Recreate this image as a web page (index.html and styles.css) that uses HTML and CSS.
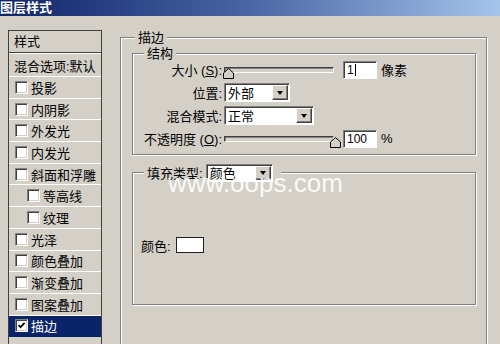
FILE: index.html
```html
<!DOCTYPE html>
<html>
  <head>
    <title>图层样式</title>
    <link rel="stylesheet" href="styles.css">
  </head>
  <body>
    <div class="titlebar">图层样式</div>
    <div class="content">
      <div class="list">
        <div class="list-head">样式</div>
        <div class="item blend">混合选项:默认</div>
        <div class="item"><span class="check"></span>投影</div>
        <div class="item"><span class="check"></span>内阴影</div>
        <div class="item"><span class="check"></span>外发光</div>
        <div class="item"><span class="check"></span>内发光</div>
        <div class="item"><span class="check"></span>斜面和浮雕</div>
        <div class="item sub"><span class="check"></span>等高线</div>
        <div class="item sub"><span class="check"></span>纹理</div>
        <div class="item"><span class="check"></span>光泽</div>
        <div class="item"><span class="check"></span>颜色叠加</div>
        <div class="item"><span class="check"></span>渐变叠加</div>
        <div class="item"><span class="check"></span>图案叠加</div>
        <div class="item selected">
          <span class="check"><svg width="9" height="9" viewBox="0 0 9 9"><polyline points="1.5,4 3.5,6.2 7.6,1.8" fill="none" stroke="#000" stroke-width="1.7"/></svg></span>描边
        </div>
      </div>

      <div class="group main">
        <div class="group-title main-title">描边</div>

        <div class="group struct">
          <div class="group-title inner-title">结构</div>
          <div class="row">
            <span class="row-label">大小 (<u>S</u>):</span>
            <div class="slider">
              <div class="track"></div>
              <svg class="thumb at-min" width="11" height="11" viewBox="0 0 11 11"><polygon points="5.5,0.5 10.5,5 10.5,10.5 0.5,10.5 0.5,5" fill="#d4d0c8" stroke="#000"/></svg>
            </div>
            <div class="field">1<span class="caret"></span></div>
            <span class="unit">像素</span>
          </div>
          <div class="row">
            <span class="row-label">位置:</span>
            <div class="select pos"><span class="select-text">外部</span><span class="drop-btn"><i></i></span></div>
          </div>
          <div class="row">
            <span class="row-label">混合模式:</span>
            <div class="select mode"><span class="select-text">正常</span><span class="drop-btn"><i></i></span></div>
          </div>
          <div class="row">
            <span class="row-label">不透明度 (<u>O</u>):</span>
            <div class="slider">
              <div class="track"></div>
              <svg class="thumb at-max" width="11" height="11" viewBox="0 0 11 11"><polygon points="5.5,0.5 10.5,5 10.5,10.5 0.5,10.5 0.5,5" fill="#d4d0c8" stroke="#000"/></svg>
            </div>
            <div class="field">100</div>
            <span class="unit">%</span>
          </div>
        </div>

        <div class="group fill">
          <div class="group-title fill-title">
            <span>填充类型:</span>
            <div class="select kind"><span class="select-text">颜色</span><span class="drop-btn"><i></i></span></div>
          </div>
          <div class="color-row">
            <span>颜色:</span>
            <span class="swatch"></span>
          </div>
          <div class="watermark">www.oops.com</div>
        </div>
      </div>
    </div>
  </body>
</html>
```

FILE: styles.css
```css
body {
  margin: 0;
  width: 500px;
  height: 344px;
  overflow: hidden;
  background: #d4d0c8;
  color: #000;
  font-family: "Liberation Sans", "Noto Sans CJK SC", sans-serif;
  font-size: 13px;
}

.titlebar {
  height: 16px;
  line-height: 16px;
  background: linear-gradient(to right, #0f2468, #4a66a4 50%, #a4c4ec);
  color: #fff;
  font-weight: bold;
}

.content {
  display: flex;
  align-items: flex-start;
  height: 328px;
  box-sizing: border-box;
  padding: 14px 0 0 8px;
}

/* style list on the left */
.list {
  width: 94px;
  flex: none;
  align-self: stretch;
  box-sizing: border-box;
  border: 1px solid #404040;
  border-bottom: none;
  overflow: hidden;
}
.list-head {
  height: 21px;
  line-height: 21px;
  padding-left: 5px;
  border-bottom: 1px solid #404040;
}
.item {
  display: flex;
  align-items: center;
  height: 21.7px;
  box-sizing: border-box;
  padding-left: 6px;
  border-bottom: 1px solid #fff;
  white-space: nowrap;
}
.item.blend {
  height: 24px;
  padding-left: 5px;
  border-top: 1px solid #fff;
}
.item.sub {
  padding-left: 18px;
}
.item.selected {
  background: #0a246a;
  color: #fff;
  border-bottom-color: #0a246a;
}
.check {
  width: 13px;
  height: 13px;
  flex: none;
  box-sizing: border-box;
  margin-right: 3px;
  border: 1px solid;
  border-color: #808080 #fff #fff #808080;
  box-shadow: inset 1px 1px #404040, inset -1px -1px #d4d0c8;
  background: #fff;
  padding: 1px;
}
.check svg {
  display: block;
}

/* group boxes */
.group {
  display: flex;
  flex-direction: column;
  align-items: flex-start;
  box-sizing: border-box;
  border: 1px solid #808080;
  box-shadow: inset 1px 1px #fff, 1px 1px #fff;
}
.group-title {
  height: 15px;
  line-height: 15px;
  padding: 0 3px;
  background: #d4d0c8;
}
.main {
  width: 367px;
  height: 307px;
  margin: 7px 0 0 18px;
  padding: 0 11px;
  border-bottom: none;
}
.main-title {
  margin: -8px 0 0 3px;
}
.struct {
  width: 344px;
  margin-top: 8px;
  padding-bottom: 4px;
}
.inner-title {
  margin: -8px 0 -3px 11px;
}

.row {
  display: flex;
  align-items: center;
  height: 23px;
}
.row-label {
  width: 89px;
  margin-right: 2px;
  text-align: right;
  white-space: nowrap;
}

.slider {
  position: relative;
  width: 110px;
  height: 6px;
  margin-right: 9px;
}
.track {
  height: 6px;
  box-sizing: border-box;
  border: 1px solid;
  border-color: #404040 #fff #fff #404040;
  box-shadow: inset 1px 1px #808080;
}
.thumb {
  position: absolute;
  top: 1px;
}
.thumb.at-min {
  left: -1px;
}
.thumb.at-max {
  left: 106px;
}

.field {
  display: flex;
  align-items: center;
  width: 34px;
  height: 18px;
  box-sizing: border-box;
  padding-left: 3px;
  border: 1px solid;
  border-color: #808080 #fff #fff #808080;
  box-shadow: inset 1px 1px #404040;
  background: #fff;
  font-size: 12px;
}
.caret {
  width: 1px;
  height: 12px;
  margin-left: 1px;
  background: #000;
}
.unit {
  margin-left: 4px;
}

.select {
  display: flex;
  align-items: center;
  height: 19px;
  box-sizing: border-box;
  padding: 1px;
  border: 1px solid;
  border-color: #808080 #fff #fff #808080;
  box-shadow: inset 1px 1px #404040;
  background: #fff;
}
.select.pos {
  width: 66px;
}
.select.mode {
  width: 90px;
}
.select.kind {
  width: 67px;
  height: 18px;
  margin-left: 3px;
}
.select-text {
  flex: 1;
  padding-left: 2px;
}
.drop-btn {
  display: flex;
  align-items: center;
  justify-content: center;
  width: 16px;
  height: 100%;
  box-sizing: border-box;
  border: 1px solid;
  border-color: #fff #404040 #404040 #fff;
  box-shadow: inset -1px -1px #808080;
  background: #d4d0c8;
}
.drop-btn i {
  width: 0;
  height: 0;
  border-left: 3.5px solid transparent;
  border-right: 3.5px solid transparent;
  border-top: 4px solid #000;
}

.fill {
  position: relative;
  width: 344px;
  height: 133px;
  margin-top: 17px;
}
.fill-title {
  display: flex;
  align-items: center;
  height: 18px;
  margin: -9px 0 0 11px;
  padding: 0 8px 0 3px;
}
.color-row {
  display: flex;
  align-items: center;
  height: 18px;
  margin: 54px 0 0 8px;
}
.swatch {
  width: 28px;
  height: 16px;
  box-sizing: border-box;
  margin-left: 5px;
  border: 1px solid #202020;
  background: #fff;
}

.watermark {
  position: absolute;
  left: 35px;
  top: -3px;
  font-family: "Liberation Sans", sans-serif;
  font-size: 26px;
  line-height: 26px;
  color: rgba(255, 255, 255, 0.88);
}
```
